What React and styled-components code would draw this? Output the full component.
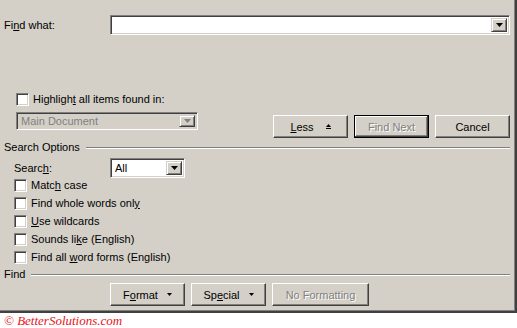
// Packages
import React from "react"
import styled, { createGlobalStyle, css } from "styled-components"

// Styles
const GlobalStyle = createGlobalStyle`
    html, body {
        margin: 0;
        background: #ffffff;
    }

    body {
        font-family: "Liberation Sans", Arial, sans-serif;
        font-size: 11px;
        color: #000000;
    }
`

const Dialog = styled.div`
    width: 517px;
    height: 313px;
    box-sizing: border-box;
    padding: 15px 5px 0 4px;
    background: #d4d0c8;
    border-right: 2px solid #404040;
    border-bottom: 2px solid #404040;
    box-shadow: inset -1px -1px 0 #808080;
`

const Row = styled.div`
    display: flex;
    align-items: center;
    height: ${({ $height }) => $height || 13}px;
    margin-top: ${({ $top }) => $top || 0}px;
    padding-left: ${({ $indent }) => $indent || 0}px;
`

const Label = styled.span`
    width: ${({ $width }) => ($width ? `${$width}px` : "auto")};
    flex: none;
    line-height: 13px;
    white-space: nowrap;
`

const Key = styled.u`
    text-decoration: underline;
    text-underline-offset: 1px;
`

const sunken = css`
    box-sizing: border-box;
    border: 1px solid;
    border-color: #808080 #ffffff #ffffff #808080;
    box-shadow: inset 1px 1px 0 #404040, inset -1px -1px 0 #d4d0c8;
`

const raised = css`
    box-sizing: border-box;
    border: 1px solid;
    border-color: #ffffff #404040 #404040 #ffffff;
    box-shadow: inset -1px -1px 0 #808080;
`

const Combo = styled.div`
    ${sunken};
    display: flex;
    align-items: center;
    width: ${({ $width }) => $width}px;
    height: ${({ $height }) => $height || 20}px;
    padding: 2px;
    background: ${({ $disabled }) => ($disabled ? "#d4d0c8" : "#ffffff")};
    color: ${({ $disabled }) => ($disabled ? "#808080" : "#000000")};
`

const ComboText = styled.span`
    flex: 1;
    padding-left: 2px;
    line-height: 13px;
    white-space: nowrap;
    overflow: hidden;
`

const DropButton = styled.span`
    box-sizing: border-box;
    display: flex;
    align-items: center;
    justify-content: center;
    width: 16px;
    height: 100%;
    background: #d4d0c8;
    border: 1px solid;
    border-color: #d4d0c8 #404040 #404040 #d4d0c8;
    box-shadow: inset 1px 1px 0 #ffffff, inset -1px -1px 0 #808080;
`

const Check = styled.span`
    ${sunken};
    flex: none;
    width: 13px;
    height: 13px;
    background: #ffffff;
    margin-right: 4px;
`

const Button = styled.div`
    ${raised};
    display: flex;
    align-items: center;
    justify-content: center;
    gap: ${({ $gap }) => $gap || 0}px;
    width: ${({ $width }) => $width || 75}px;
    height: 23px;
    background: #d4d0c8;
    color: ${({ $disabled }) => ($disabled ? "#808080" : "#000000")};
    text-shadow: ${({ $disabled }) => ($disabled ? "1px 1px 0 #ffffff" : "none")};
    white-space: nowrap;

    ${({ $default }) =>
        $default &&
        css`
            border: 1px solid #000000;
            box-shadow: inset -1px -1px 0 #404040, inset 1px 1px 0 #ffffff,
                inset -2px -2px 0 #808080;
        `}
`

const ButtonGroup = styled.div`
    display: flex;
    gap: 6px;
    margin-left: ${({ $auto }) => ($auto ? "auto" : "0")};
    margin-top: ${({ $top }) => $top || 0}px;
    padding-left: ${({ $indent }) => $indent || 0}px;
`

const OptionsRow = styled.div`
    display: flex;
    align-items: flex-start;
    margin-top: 6px;
`

const Highlight = styled.div`
    margin-top: 58px;
    padding-left: 12px;
`

const GroupHeader = styled.div`
    display: flex;
    align-items: center;
    gap: 6px;
    height: 13px;
    margin-top: ${({ $top }) => $top}px;
`

const GroupLine = styled.span`
    flex: 1;
    height: 0;
    border-top: 1px solid #808080;
    border-bottom: 1px solid #ffffff;
`

const CheckList = styled.div`
    display: flex;
    flex-direction: column;
    gap: 5px;
    margin-top: 1px;
    padding-left: 10px;
`

const Footer = styled.div`
    height: 15px;
    padding-left: 4px;
    font-family: "Liberation Serif", "Times New Roman", serif;
    font-style: italic;
    font-size: 13px;
    line-height: 16px;
    color: #e8141c;
    white-space: nowrap;
`

// Icons
function DownArrow({ color = "#000000", size = 7 }) {
    const h = Math.ceil(size / 2)
    return (
        <svg width={size} height={h} viewBox={`0 0 ${size} ${h}`}>
            <polygon points={`0,0 ${size},0 ${size / 2},${h}`} fill={color} />
        </svg>
    )
}

function LessArrow() {
    return (
        <svg width="5" height="6" viewBox="0 0 5 6">
            <polygon points="2.5,0 5,3 0,3" fill="#000000" />
            <rect x="0" y="4" width="5" height="1" fill="#000000" />
        </svg>
    )
}

function CheckOption({ children }) {
    return (
        <Row>
            <Check />
            <Label>{children}</Label>
        </Row>
    )
}

const options = [
    <>Matc<Key>h</Key> case</>,
    <>Find whole words onl<Key>y</Key></>,
    <><Key>U</Key>se wildcards</>,
    <>Sounds li<Key>k</Key>e (English)</>,
    <>Find all <Key>w</Key>ord forms (English)</>,
]

export default function App() {
    return (
        <>
            <GlobalStyle />

            <Dialog>
                <Row $height={20}>
                    <Label $width={106}>
                        Fi<Key>n</Key>d what:
                    </Label>

                    <Combo $width={400}>
                        <ComboText />
                        <DropButton>
                            <DownArrow />
                        </DropButton>
                    </Combo>
                </Row>

                <Highlight>
                    <Row>
                        <Check />
                        <Label>
                            Highligh<Key>t</Key> all items found in:
                        </Label>
                    </Row>

                    <OptionsRow>
                        <Combo $width={182} $height={18} $disabled>
                            <ComboText>Main Document</ComboText>
                            <DropButton>
                                <DownArrow color="#808080" />
                            </DropButton>
                        </Combo>

                        <ButtonGroup $auto $top={3}>
                            <Button $gap={12}>
                                <span>
                                    <Key>L</Key>ess
                                </span>
                                <LessArrow />
                            </Button>

                            <Button $default $disabled>
                                Find Next
                            </Button>

                            <Button>Cancel</Button>
                        </ButtonGroup>
                    </OptionsRow>
                </Highlight>

                <GroupHeader $top={3}>
                    <Label>Search Options</Label>
                    <GroupLine />
                </GroupHeader>

                <Row $height={20} $top={4} $indent={10}>
                    <Label $width={96}>
                        Searc<Key>h</Key>:
                    </Label>

                    <Combo $width={75}>
                        <ComboText>All</ComboText>
                        <DropButton>
                            <DownArrow />
                        </DropButton>
                    </Combo>
                </Row>

                <CheckList>
                    {options.map((text, i) => (
                        <CheckOption key={i}>{text}</CheckOption>
                    ))}
                </CheckList>

                <GroupHeader $top={4}>
                    <Label>Find</Label>
                    <GroupLine />
                </GroupHeader>

                <ButtonGroup $top={2} $indent={106}>
                    <Button $gap={9}>
                        <span>
                            F<Key>o</Key>rmat
                        </span>
                        <DownArrow size={5} />
                    </Button>

                    <Button $gap={9}>
                        <span>
                            Sp<Key>e</Key>cial
                        </span>
                        <DownArrow size={5} />
                    </Button>

                    <Button $width={97} $disabled>
                        No Formatting
                    </Button>
                </ButtonGroup>
            </Dialog>

            <Footer>© BetterSolutions.com</Footer>
        </>
    )
}
